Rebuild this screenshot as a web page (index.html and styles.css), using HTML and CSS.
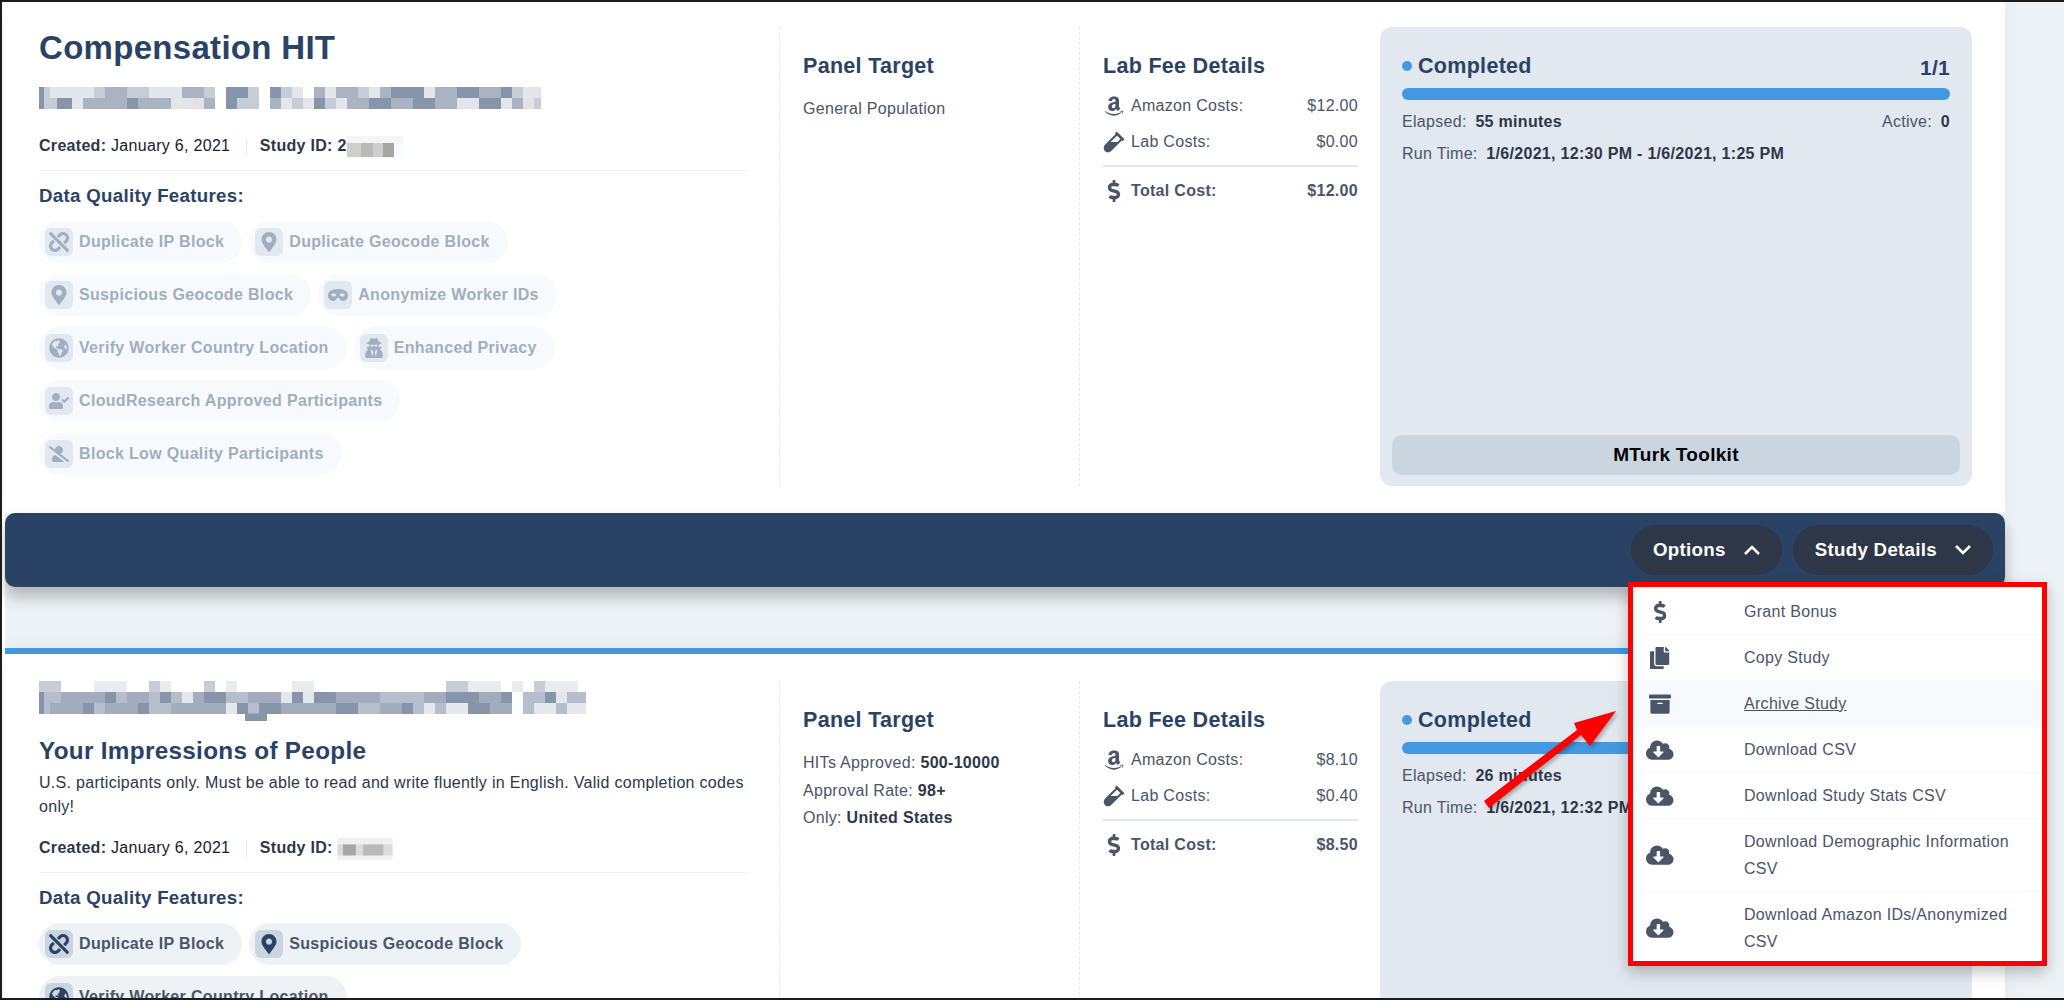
FILE: index.html
```html
<!DOCTYPE html>
<html>

<head>
    <title>Studies</title>
    <link rel="stylesheet" href="styles.css">
</head>

<body>
    <svg class="icon-defs">
        <defs>
            <path id="i-dollar" d="M209.2 233.4l-108-31.6C88.7 198.2 80 186.5 80 173.5c0-16.3 13.2-29.5 29.5-29.5h66.3c12.2 0 24.2 3.7 34.2 10.5 6.1 4.1 14.3 3.1 19.5-2l34.8-34c7.1-6.9 6.1-18.4-1.8-24.5C238 74.8 207.4 64.1 176 64V16c0-8.8-7.2-16-16-16h-32c-8.8 0-16 7.2-16 16v48h-2.5C45.8 64-5.4 118.7.5 183.6c4.2 46.1 39.4 83.6 83.8 96.6l102.5 30c12.5 3.7 21.2 15.3 21.2 28.3 0 16.3-13.2 29.5-29.5 29.5h-66.3C100 368 88 364.3 78 357.5c-6.1-4.1-14.3-3.1-19.5 2l-34.8 34c-7.1 6.9-6.1 18.4 1.8 24.5 24.5 19.2 55.1 29.9 86.5 30v48c0 8.8 7.2 16 16 16h32c8.8 0 16-7.2 16-16v-48.2c46.6-.9 90.3-28.6 105.7-72.7 21.5-61.6-14.6-124.8-72.5-141.7z"/>
            <path id="i-copy" d="M320 448v40c0 13.255-10.745 24-24 24H24c-13.255 0-24-10.745-24-24V120c0-13.255 10.745-24 24-24h72v296c0 30.879 25.121 56 56 56h168zm0-344V0H152c-13.255 0-24 10.745-24 24v368c0 13.255 10.745 24 24 24h272c13.255 0 24-10.745 24-24V128H344c-13.2 0-24-10.8-24-24zm120.971-31.029L375.029 7.029A24 24 0 0 0 358.059 0H352v96h96v-6.059a24 24 0 0 0-7.029-16.97z"/>
            <path id="i-archive" d="M32 448c0 17.7 14.3 32 32 32h384c17.7 0 32-14.3 32-32V160H32v288zm160-212c0-6.6 5.4-12 12-12h104c6.6 0 12 5.4 12 12v8c0 6.6-5.4 12-12 12H204c-6.6 0-12-5.4-12-12v-8zM480 32H32C14.3 32 0 46.3 0 64v48c0 8.8 7.2 16 16 16h480c8.8 0 16-7.2 16-16V64c0-17.7-14.3-32-32-32z"/>
            <path id="i-cloud" d="M537.6 226.6c4.1-10.7 6.4-22.4 6.4-34.6 0-53-43-96-96-96-19.7 0-38.1 6-53.3 16.2C367 64.2 315.3 32 256 32c-88.4 0-160 71.6-160 160 0 2.7.1 5.4.2 8.1C40.2 219.8 0 273.2 0 336c0 79.5 64.5 144 144 144h368c70.7 0 128-57.3 128-128 0-61.9-44-113.6-102.4-125.4zm-132.9 88.7L299.3 420.7c-6.2 6.2-16.4 6.2-22.6 0L171.3 315.3c-10.1-10.1-2.9-27.3 11.3-27.3H248V176c0-8.8 7.2-16 16-16h48c8.8 0 16 7.2 16 16v112h65.4c14.2 0 21.4 17.2 11.3 27.3z"/>
            <path id="i-marker" d="M172.268 501.67C26.97 291.031 0 268.413 0 192 0 85.961 85.961 0 192 0s192 85.961 192 192c0 76.413-26.97 99.031-172.268 309.67-9.535 13.774-29.93 13.773-39.464 0zM192 272c44.183 0 80-35.817 80-80s-35.817-80-80-80-80 35.817-80 80 35.817 80 80 80z"/>
            <path id="i-amazon" d="M257.2 162.7c-48.7 1.8-169.5 15.5-169.5 117.5 0 109.5 138.3 114 183.5 43.2 6.5 10.2 35.4 37.5 45.3 46.8l56.8-56S341 288.9 341 261.4V114.3C341 89 316.5 32 228.7 32 140.7 32 94 87 94 136.3l73.5 6.8c16.3-49.5 54.2-49.5 54.2-49.5 40.7-.1 35.5 29.8 35.5 69.1zm0 86.8c0 80-84.2 68-84.2 17.2 0-47.2 50.5-56.7 84.2-57.8v40.6zm136 163.5c-7.7 10-70 67-174.5 67S34.2 408.5 9.7 379c-6.8-7.7 1-11.3 5.5-8.3C88.5 415.2 203 488.5 387.7 401c7.5-3.7 13.3 2 5.5 12zm39.8 2.2c-6.5 15.8-16 26.8-21.2 31-5.5 4.5-9.5 2.7-6.5-3.8s19.3-46.5 12.7-55c-6.5-8.3-37-4.3-48-3.2-10.8 1-13 2-14-.3-2.3-5.7 21.7-15.5 37.5-17.5 15.7-1.8 41-.8 46 5.7 3.7 5.1 0 27.1-6.5 43.1z"/>
            <path id="i-vial" d="M477.7 186.1L309.5 18.3c-3.1-3.1-8.2-3.1-11.3 0l-34 33.9c-3.1 3.1-3.1 8.2 0 11.3l11.2 11.1L33 316.5c-38.8 38.7-45.1 102-9.4 143.5 20.6 24 49.5 36 78.4 35.9 26.4 0 52.8-10 72.9-30.1l246.3-245.7 11.2 11.1c3.1 3.1 8.2 3.1 11.3 0l34-33.9c3.1-3 3.1-8.1 0-11.2zM318 256H161l148-147.7 78.5 78.3L318 256z"/>
            <path id="i-unlink" d="M304.083 405.907c4.686 4.686 4.686 12.284 0 16.971l-44.674 44.674c-59.263 59.262-155.693 59.266-214.961 0-59.264-59.265-59.264-155.696 0-214.96l44.675-44.675c4.686-4.686 12.284-4.686 16.97 0l39.598 39.598c4.686 4.686 4.686 12.284 0 16.971l-44.675 44.674c-28.072 28.073-28.072 73.75 0 101.823 28.072 28.072 73.75 28.073 101.824 0l44.674-44.674c4.686-4.686 12.284-4.686 16.971 0l39.598 39.598zm-56.568-260.216c4.686 4.686 12.284 4.686 16.971 0l44.674-44.674c28.072-28.075 73.75-28.073 101.824 0 28.072 28.073 28.072 73.75 0 101.823l-44.675 44.674c-4.686 4.686-4.686 12.284 0 16.971l39.598 39.598c4.686 4.686 12.284 4.686 16.97 0l44.675-44.675c59.265-59.265 59.265-155.695 0-214.96-59.266-59.264-155.695-59.264-214.961 0l-44.674 44.674c-4.686 4.686-4.686 12.284 0 16.971l39.598 39.598zm234.828 359.28l22.627-22.627c9.373-9.373 9.373-24.569 0-33.941L63.598 7.029c-9.373-9.373-24.569-9.373-33.941 0L7.029 29.657c-9.373 9.373-9.373 24.569 0 33.941l441.373 441.373c9.373 9.372 24.569 9.372 33.941 0z"/>
            <path id="i-globe" d="M248 8C111.03 8 0 119.03 0 256s111.03 248 248 248 248-111.03 248-248S384.97 8 248 8zm82.29 357.6c-3.9 3.88-7.99 7.95-11.31 11.28-2.99 3-5.1 6.7-6.17 10.71-1.51 5.66-2.73 11.38-4.77 16.87l-17.39 46.85c-13.76 3-28 4.69-42.65 4.69v-27.38c1.69-12.62-7.64-36.26-22.63-51.25-6-6-9.37-14.14-9.37-22.63v-32.01c0-11.64-6.27-22.34-16.46-27.97-14.37-7.95-34.81-19.06-48.81-26.11-11.48-5.78-22.1-13.14-31.65-21.75l-.8-.72a114.792 114.792 0 0 1-18.06-20.74c-9.38-13.77-24.66-36.42-34.59-51.14 20.47-45.5 57.36-82.04 103.2-101.89l24.01 12.01C203.48 89.74 216 82.01 216 70.11v-11.3c7.99-1.29 16.12-2.11 24.39-2.42l28.3 28.3c6.25 6.25 6.25 16.38 0 22.63L264 112l-10.34 10.34c-3.12 3.12-3.12 8.19 0 11.31l4.69 4.69c3.12 3.12 3.12 8.19 0 11.31l-8 8a8.008 8.008 0 0 1-5.66 2.34h-8.99c-2.08 0-4.08.81-5.58 2.27l-9.92 9.65a8.008 8.008 0 0 0-1.58 9.31l15.59 31.19c2.66 5.32-1.21 11.58-7.15 11.58h-5.64c-1.93 0-3.79-.7-5.24-1.96l-9.28-8.06a16.017 16.017 0 0 0-15.55-3.1l-31.17 10.39a11.95 11.95 0 0 0-8.17 11.34c0 4.53 2.56 8.66 6.61 10.69l11.08 5.54c9.41 4.71 19.79 7.16 30.31 7.16s22.59 27.29 32 32h66.75c8.49 0 16.62 3.37 22.63 9.37l13.69 13.69a30.503 30.503 0 0 1 8.93 21.57 46.536 46.536 0 0 1-13.72 32.98zM417 274.25c-5.79-1.45-10.84-5-14.15-9.97l-17.98-26.97a23.97 23.97 0 0 1 0-26.62l19.59-29.38c2.32-3.47 5.5-6.29 9.24-8.15l12.98-6.49C440.2 193.59 448 223.87 448 256c0 8.67-.74 17.16-1.82 25.54L417 274.25z"/>
            <path id="i-usercheck" d="M224 256c70.7 0 128-57.3 128-128S294.7 0 224 0 96 57.3 96 128s57.3 128 128 128zm89.6 32h-16.7c-22.2 10.2-46.9 16-72.9 16s-50.6-5.8-72.9-16h-16.7C60.2 288 0 348.2 0 422.4V464c0 26.5 21.5 48 48 48h352c26.5 0 48-21.5 48-48v-41.6c0-74.2-60.2-134.4-134.4-134.4zm323-128.4l-27.8-28.1c-4.6-4.7-12.1-4.7-16.8-.1l-104.8 104-45.5-45.8c-4.6-4.7-12.1-4.7-16.8-.1l-28.1 27.9c-4.7 4.6-4.7 12.1-.1 16.8l81.7 82.3c4.6 4.7 12.1 4.7 16.8.1l141.3-140.2c4.6-4.7 4.7-12.2.1-16.8z"/>
            <path id="i-userslash" d="M633.8 458.1L362.3 248.3C412.1 230.7 448 183.8 448 128 448 57.3 390.7 0 320 0c-67.1 0-121.5 51.8-126.9 117.4L45.5 3.4C38.5-2 28.5-.8 23 6.2L3.4 31.4c-5.4 7-4.2 17 2.8 22.4l588.4 454.7c7 5.4 17 4.2 22.5-2.8l19.6-25.3c5.4-6.8 4.1-16.9-2.9-22.3zM96 422.4V464c0 26.5 21.5 48 48 48h350.2L207.4 290.3C144.2 301.3 96 356 96 422.4z"/>
            <path id="i-mask" d="M320.67 64c-442.6 0-357.57 384-158.46 384 39.9 0 77.47-20.69 101.42-55.86l25.73-37.79c15.66-22.99 46.97-22.99 62.63 0l25.73 37.79C401.66 427.31 439.23 448 479.13 448c189.86 0 290.63-384-158.46-384zM184 308.36c-41.06 0-67.76-25.66-80.08-41.05-5.23-6.53-5.23-16.09 0-22.63 12.32-15.4 39.01-41.05 80.08-41.05s67.76 25.66 80.08 41.05c5.23 6.53 5.23 16.09 0 22.63-12.32 15.39-39.02 41.05-80.08 41.05zm272 0c-41.06 0-67.76-25.66-80.08-41.05-5.23-6.53-5.23-16.09 0-22.63 12.32-15.4 39.01-41.05 80.08-41.05s67.76 25.66 80.08 41.05c5.23 6.53 5.23 16.09 0 22.63-12.32 15.39-39.02 41.05-80.08 41.05z"/>
            <path id="i-secret" d="M383.9 308.3l23.9-62.6c4-10.5-3.7-21.7-15-21.7h-58.5c11-18.9 17.8-40.6 17.8-64v-.3c39.2-7.8 64-19.1 64-31.7 0-13.3-27.3-25.1-70.1-33-9.2-32.8-27-65.8-40.6-82.8-9.5-11.9-25.9-15.6-39.5-8.8l-27.6 13.8c-9 4.5-19.6 4.5-28.6 0L182.1 3.4c-13.6-6.8-30-3.1-39.5 8.8-13.5 17-31.4 50-40.6 82.8-42.7 7.9-70 19.7-70 33 0 12.6 24.8 23.9 64 31.7v.3c0 23.4 6.8 45.1 17.8 64H56.3c-11.5 0-19.2 11.7-14.7 22.3l25.8 60.2C27.3 329.8 0 372.7 0 422.4v44.8C0 491.9 20.1 512 44.8 512h358.4c24.7 0 44.8-20.1 44.8-44.8v-44.8c0-48.4-25.8-90.4-64.1-114.1zM176 480l-41.6-192 49.6 32 24 40-32 120zm96 0l-32-120 24-40 49.6-32L272 480zm41.7-298.5c-3.9 11.9-7 24.6-16.5 33.4-10.1 9.3-48 22.4-64-25-2.8-8.4-15.4-8.4-18.3 0-17 50.2-56 32.4-64 25-9.5-8.8-12.7-21.5-16.5-33.4-.8-2.5-6.3-5.7-6.3-5.8v-10.8c28.3 3.6 61 5.8 96 5.8s67.7-2.1 96-5.8v10.8c-.1.1-5.6 3.2-6.4 5.8z"/>
        </defs>
    </svg>

    <div class="screen">
        <div class="page">

            <!-- first study -->
            <div class="study">
                <div class="info">
                    <h2 class="study-title">Compensation HIT</h2>
                    <svg class="mosaic mosaic-name" viewBox="0 0 502 23" fill="none" stroke-width="11">
                        <rect width="502" height="22" fill="#c6cdd7"/>
                        <path stroke="#e3e7ec" d="M11 5.5H55M110 5.5H143M231 5.5H242M253 5.5H264M286 5.5H297M330 5.5H341M385 5.5H396M484 5.5H502M33 16.5H44M132 16.5H165M242 16.5H253M264 16.5H275M297 16.5H308M418 16.5H440M462 16.5H473"/>
                        <path stroke="#a9b3c1" d="M66 5.5H88M143 5.5H165M275 5.5H286M297 5.5H319M341 5.5H352M396 5.5H418M440 5.5H462M44 16.5H88M99 16.5H132M165 16.5H187M220 16.5H242M308 16.5H330M352 16.5H374M396 16.5H418M473 16.5H484"/>
                        <path stroke="#8795ab" d="M0 5.5H5M0 16.5H5M187 5.5H209M231 5.5H242M264 5.5H275M352 5.5H374M374 5.5H385M418 5.5H440M462 5.5H473M18 16.5H33M88 16.5H99M187 16.5H198M275 16.5H286M330 16.5H352M374 16.5H396M440 16.5H462"/>
                        <path stroke="#fff" d="M176 5.5H187M220 5.5H231M264 5.5H275M176 16.5H187M220 16.5H231"/>
                        <path stroke="#e6e2e4" d="M154 16.5H165M484 16.5H495"/>
                    </svg>
                    <div class="meta">
                        <b>Created:</b> January 6, 2021
                        <span class="meta-sep"></span>
                        <b>Study ID:</b> <b>2</b><svg class="mosaic mosaic-id" viewBox="0 0 56 22"><rect width="56" height="22" fill="#f3f5f6"/><rect x="0" y="7" width="47" height="14" fill="#cfcdcd"/><rect x="14" y="7" width="12" height="14" fill="#bdb9b9"/><rect x="36" y="7" width="11" height="14" fill="#a8a4a4"/><rect x="47" y="7" width="9" height="15" fill="#f6fbfd"/></svg>
                    </div>
                    <h4 class="features-title">Data Quality Features:</h4>
                    <div class="chips chips-off">
                        <div class="chip"><span class="chip-icon"><svg viewBox="0 0 512 512"><use href="#i-unlink"/></svg></span>Duplicate IP Block</div>
                        <div class="chip"><span class="chip-icon"><svg viewBox="0 0 384 512"><use href="#i-marker"/></svg></span>Duplicate Geocode Block</div>
                        <div class="chip"><span class="chip-icon"><svg viewBox="0 0 384 512"><use href="#i-marker"/></svg></span>Suspicious Geocode Block</div>
                        <div class="chip"><span class="chip-icon"><svg viewBox="0 0 640 512"><use href="#i-mask"/></svg></span>Anonymize Worker IDs</div>
                        <div class="chip"><span class="chip-icon"><svg viewBox="0 0 496 512"><use href="#i-globe"/></svg></span>Verify Worker Country Location</div>
                        <div class="chip"><span class="chip-icon"><svg viewBox="0 0 448 512"><use href="#i-secret"/></svg></span>Enhanced Privacy</div>
                        <div class="chip"><span class="chip-icon"><svg viewBox="0 0 640 512"><use href="#i-usercheck"/></svg></span>CloudResearch Approved Participants</div>
                        <div class="chip"><span class="chip-icon"><svg viewBox="0 0 640 512"><use href="#i-userslash"/></svg></span>Block Low Quality Participants</div>
                    </div>
                </div>

                <div class="panel">
                    <h3>Panel Target</h3>
                    <p class="panel-row">General Population</p>
                </div>

                <div class="fees">
                    <h3>Lab Fee Details</h3>
                    <div class="fee-row"><svg class="fee-icon" viewBox="0 0 448 512"><use href="#i-amazon"/></svg><span class="fee-name">Amazon Costs:</span><span>$12.00</span></div>
                    <div class="fee-row"><svg class="fee-icon" viewBox="0 0 480 512"><use href="#i-vial"/></svg><span class="fee-name">Lab Costs:</span><span>$0.00</span></div>
                    <div class="fee-row fee-total"><svg class="fee-icon" viewBox="-80 0 448 512"><use href="#i-dollar"/></svg><span class="fee-name">Total Cost:</span><span>$12.00</span></div>
                </div>

                <div class="status">
                    <div class="status-head">
                        <h3><span class="dot"></span>Completed</h3>
                        <span class="status-count">1/1</span>
                    </div>
                    <div class="progress"></div>
                    <div class="status-row"><span>Elapsed: <b>55 minutes</b></span><span>Active: <b>0</b></span></div>
                    <div class="status-row">
                        <span>Run Time: <b>1/6/2021, 12:30 PM - 1/6/2021, 1:25 PM</b></span>
                    </div>
                    <button class="toolkit">MTurk Toolkit</button>
                </div>
            </div>

            <div class="bar">
                <button class="bar-btn">Options
                    <svg viewBox="0 0 18 12"><path d="M2 10l7-7 7 7"/></svg>
                </button>
                <button class="bar-btn">Study Details
                    <svg viewBox="0 0 18 12"><path d="M2 2l7 7 7-7"/></svg>
                </button>

                <div class="menu">
                    <a class="menu-row"><span class="menu-icon"><svg viewBox="0 0 288 512"><use href="#i-dollar"/></svg></span>Grant Bonus</a>
                    <a class="menu-row"><span class="menu-icon"><svg viewBox="0 0 448 512"><use href="#i-copy"/></svg></span>Copy Study</a>
                    <a class="menu-row menu-row-hover"><span class="menu-icon"><svg viewBox="0 0 512 512"><use href="#i-archive"/></svg></span><span class="menu-text">Archive Study</span></a>
                    <a class="menu-row"><span class="menu-icon"><svg viewBox="0 0 640 512"><use href="#i-cloud"/></svg></span>Download CSV</a>
                    <a class="menu-row"><span class="menu-icon"><svg viewBox="0 0 640 512"><use href="#i-cloud"/></svg></span>Download Study Stats CSV</a>
                    <a class="menu-row"><span class="menu-icon"><svg viewBox="0 0 640 512"><use href="#i-cloud"/></svg></span><span class="menu-text">Download Demographic Information CSV</span></a>
                    <a class="menu-row"><span class="menu-icon"><svg viewBox="0 0 640 512"><use href="#i-cloud"/></svg></span><span class="menu-text">Download Amazon IDs/Anonymized CSV</span></a>
                </div>
            </div>

            <!-- second study -->
            <div class="study study-next">
                <div class="info">
                    <svg class="mosaic mosaic-name-2" viewBox="0 0 547 40" fill="none" stroke-width="11">
                        <rect y="11" width="547" height="22" fill="#b5bfcc"/>
                        <path stroke="#c6cdd7" d="M0 5.5H22M110 5.5H121M165 5.5H176M407 5.5H429M495 5.5H506"/>
                        <path stroke="#e9ecef" d="M55 5.5H88M121 5.5H132M187 5.5H198M253 5.5H275M429 5.5H462M473 5.5H484M506 5.5H539"/>
                        <path stroke="#8795ab" d="M0 16.5H5M0 27.5H5M66 16.5H77M121 16.5H132M165 16.5H187M253 16.5H264M275 16.5H297M407 16.5H440M462 16.5H473M506 16.5H517M44 27.5H55M99 27.5H110M198 27.5H209M220 27.5H242M297 27.5H319M363 27.5H374M429 27.5H451"/>
                        <path stroke="#a1adbc" d="M22 16.5H66M88 16.5H110M143 16.5H165M209 16.5H242M297 16.5H341M385 16.5H407M440 16.5H462M11 27.5H44M66 27.5H99M132 27.5H198M242 27.5H297M341 27.5H363M451 27.5H484"/>
                        <path stroke="#e4e8ec" d="M143 16.5H154M242 16.5H253M264 16.5H275M473 16.5H484M517 16.5H528M187 27.5H198M385 27.5H396M407 27.5H429M495 27.5H517M528 27.5H547"/>
                        <path stroke="#fff" d="M473 16.5H484M473 27.5H484"/>
                        <path stroke="#8795ab" d="M206 38H228"/>
                    </svg>
                    <h2 class="study-title study-title-sub">Your Impressions of People</h2>
                    <p class="study-desc">U.S. participants only. Must be able to read and write fluently in English. Valid completion codes only!</p>
                    <div class="meta meta-tight">
                        <b>Created:</b> January 6, 2021
                        <span class="meta-sep"></span>
                        <b>Study ID:</b> <svg class="mosaic mosaic-id" viewBox="0 0 60 24"><rect width="60" height="24" fill="#f0f0f1"/><rect x="0" y="7" width="60" height="12" fill="#dcdbdc"/><rect x="6" y="7" width="14" height="12" fill="#a9a6a8"/><rect x="28" y="7" width="22" height="12" fill="#bcb9ba"/></svg>
                    </div>
                    <h4 class="features-title">Data Quality Features:</h4>
                    <div class="chips">
                        <div class="chip"><span class="chip-icon"><svg viewBox="0 0 512 512"><use href="#i-unlink"/></svg></span>Duplicate IP Block</div>
                        <div class="chip"><span class="chip-icon"><svg viewBox="0 0 384 512"><use href="#i-marker"/></svg></span>Suspicious Geocode Block</div>
                        <div class="chip"><span class="chip-icon"><svg viewBox="0 0 496 512"><use href="#i-globe"/></svg></span>Verify Worker Country Location</div>
                    </div>
                </div>

                <div class="panel">
                    <h3>Panel Target</h3>
                    <p class="panel-row">HITs Approved: <b>500-10000</b></p>
                    <p class="panel-row">Approval Rate: <b>98+</b></p>
                    <p class="panel-row">Only: <b>United States</b></p>
                </div>

                <div class="fees">
                    <h3>Lab Fee Details</h3>
                    <div class="fee-row"><svg class="fee-icon" viewBox="0 0 448 512"><use href="#i-amazon"/></svg><span class="fee-name">Amazon Costs:</span><span>$8.10</span></div>
                    <div class="fee-row"><svg class="fee-icon" viewBox="0 0 480 512"><use href="#i-vial"/></svg><span class="fee-name">Lab Costs:</span><span>$0.40</span></div>
                    <div class="fee-row fee-total"><svg class="fee-icon" viewBox="-80 0 448 512"><use href="#i-dollar"/></svg><span class="fee-name">Total Cost:</span><span>$8.50</span></div>
                </div>

                <div class="status">
                    <div class="status-head">
                        <h3><span class="dot"></span>Completed</h3>
                    </div>
                    <div class="progress"></div>
                    <div class="status-row"><span>Elapsed: <b>26 minutes</b></span></div>
                    <div class="status-row"><span>Run Time: <b>1/6/2021, 12:32 PM</b></span></div>
                </div>
            </div>

        </div>

        <!-- red arrow drawn on the screenshot -->
        <svg class="arrow" viewBox="0 0 160 115">
            <polygon points="146,11 120,46 111,35 19,108 14,101 107,30 104,23"/>
        </svg>
    </div>
</body>

</html>
```

FILE: styles.css
```css
* {
    margin: 0;
    box-sizing: border-box;
}

body {
    font-family: "Liberation Sans", Arial, sans-serif;
    font-size: 16px;
    letter-spacing: .3px;
    color: #4a5568;
    background-color: #edf2f7;
    overflow: hidden;
}

.icon-defs {
    display: none;
}

.screen {
    position: relative;
    height: 1000px;
    overflow: hidden;
    border: 2px solid #1c1c1c;
    border-right: none;
    background-color: #edf2f7;
}

.page {
    width: 2003px;
    border-left: 3px solid #fff;
}

h3 {
    font-size: 21.5px;
    line-height: 28px;
    color: #2a4365;
}

/* study card */
.study {
    display: grid;
    grid-template-columns: 775px 300px 300px 592px;
    padding: 25px 33px 27px 0;
    background-color: #fff;
    box-shadow: 0 0 20px rgba(0, 0, 0, .05);
}

.study-next {
    padding-top: 27px;
    border-top: 6px solid #4299e1;
}

.info {
    padding: 0 32px 0 34px;
    border-right: 1px dashed #e2e8f0;
}

.study-title {
    margin-top: 1px;
    font-size: 33px;
    line-height: 40px;
    color: #2a4365;
}

.study-title-sub {
    margin-top: 14px;
    font-size: 24.3px;
    line-height: 32px;
}

.study-desc {
    margin-top: 4px;
    font-size: 16px;
    line-height: 24px;
    color: #2d3748;
}

.mosaic {
    display: block;
}

.mosaic-name {
    width: 502px;
    height: 23px;
    margin-top: 19px;
}

.mosaic-name-2 {
    width: 547px;
    height: 40px;
}

.mosaic-id {
    display: inline-block;
    width: 56px;
    height: 22px;
    margin: -4px 0;
    vertical-align: middle;
}

.meta {
    margin-top: 26px;
    padding-bottom: 14px;
    border-bottom: 1px solid #edf2f7;
    font-size: 16px;
    line-height: 20px;
    color: #1a202c;
}

.meta-tight {
    margin-top: 19px;
}

.meta b {
    color: #2d3748;
}

.meta-sep {
    display: inline-block;
    height: 16px;
    margin: 0 8px 0 11px;
    border-left: 1px solid #e2e8f0;
    vertical-align: middle;
}

.features-title {
    margin-top: 13px;
    font-size: 18.7px;
    line-height: 24px;
    color: #2a4365;
}

/* data quality chips */
.chips {
    display: flex;
    flex-wrap: wrap;
    gap: 11px 7px;
    margin-top: 13px;
    padding-right: 50px;
}

.chip {
    display: flex;
    align-items: center;
    height: 42px;
    padding: 0 18px 0 6px;
    border-radius: 21px;
    background-color: #edf2f7;
    font-size: 16px;
    font-weight: bold;
    letter-spacing: .33px;
    color: #4a5568;
}

.chip-icon {
    display: flex;
    align-items: center;
    justify-content: center;
    width: 28px;
    height: 28px;
    margin-right: 6px;
    border-radius: 6px;
    background-color: #cbd5e0;
    color: #2a4365;
}

.chip-icon svg {
    width: 20px;
    height: 20px;
    fill: currentColor;
}

.chips-off .chip {
    background-color: #f7fafc;
    color: #a0aec0;
}

.chips-off .chip-icon {
    background-color: #e2e8f0;
    color: #a0aec0;
}

/* panel target */
.panel {
    padding: 25px 0 0 23px;
    border-right: 1px dashed #e2e8f0;
}

.panel-row {
    font-size: 16px;
    line-height: 27.5px;
}

.panel-row:nth-child(2) {
    margin-top: 15px;
}

.panel-row b {
    color: #2d3748;
}

/* lab fees */
.fees {
    padding: 25px 22px 0 23px;
}

.fee-row {
    display: flex;
    align-items: center;
    height: 36px;
    font-size: 16px;
}

h3 + .fee-row {
    margin-top: 8px;
}

.fee-icon {
    width: 22px;
    height: 22px;
    margin-right: 6px;
    fill: currentColor;
}

.fee-name {
    flex: 1;
}

.fee-total {
    margin-top: 5px;
    padding-top: 6px;
    border-top: 2px solid #e2e8f0;
    font-weight: bold;
    box-sizing: content-box;
}

/* status box */
.status {
    display: flex;
    flex-direction: column;
    min-height: 459px;
    padding: 25px 22px 11px 22px;
    border-radius: 12px;
    background-color: #e2e8f0;
}

.status-head {
    display: flex;
    justify-content: space-between;
    align-items: flex-end;
}

.status-head h3 {
    display: flex;
    align-items: center;
}

.dot {
    width: 10px;
    height: 10px;
    margin-right: 6px;
    border-radius: 50%;
    background-color: #4299e1;
}

.status-count {
    font-size: 21px;
    font-weight: bold;
    color: #2a4365;
}

.progress {
    height: 12px;
    margin-top: 8px;
    border-radius: 6px;
    background-color: #4299e1;
}

.status-row {
    display: flex;
    justify-content: space-between;
    margin-top: 12px;
    font-size: 16px;
    line-height: 20px;
}

.status-row b {
    margin-left: 4px;
    color: #2d3748;
}

.toolkit {
    margin: auto -10px 0 -10px;
    height: 40px;
    border: none;
    border-radius: 10px;
    background-color: #cbd5e0;
    font-family: inherit;
    font-size: 19px;
    font-weight: bold;
    letter-spacing: .3px;
    color: #000;
}

/* navy action bar */
.bar {
    position: relative;
    z-index: 1;
    display: flex;
    justify-content: flex-end;
    align-items: center;
    gap: 11px;
    height: 74px;
    margin-bottom: 61px;
    padding-right: 12px;
    border-radius: 10px;
    background-color: #2a4365;
    box-shadow: 0 10px 15px rgba(0, 0, 0, .25);
}

.bar-btn {
    display: flex;
    align-items: center;
    gap: 17px;
    height: 50px;
    padding: 0 21px 0 22px;
    border: none;
    border-radius: 25px;
    background-color: #2d3748;
    font-family: inherit;
    font-size: 18.7px;
    font-weight: bold;
    letter-spacing: .3px;
    color: #fff;
}

.bar-btn svg {
    width: 18px;
    height: 12px;
    fill: none;
    stroke: #fff;
    stroke-width: 2.6;
}

/* options dropdown, with the red box of the screenshot */
.menu {
    position: absolute;
    top: 69px;
    right: -42px;
    width: 419px;
    border: 5px solid #f00;
    background-color: #fff;
    box-shadow: 0 6px 14px rgba(0, 0, 0, .25);
}

.menu-row {
    display: flex;
    align-items: center;
    padding: 9px 12px 9px 0;
    border-bottom: 1px solid #f7fafc;
    font-size: 16px;
    line-height: 27px;
}

.menu-row:first-child {
    padding-top: 11px;
}

.menu-row:last-child {
    padding-bottom: 6px;
    border-bottom: none;
}

.menu-row-hover {
    background-color: #f7fafc;
}

.menu-row-hover .menu-text {
    text-decoration: underline;
}

.menu-icon {
    flex: none;
    display: flex;
    justify-content: center;
    width: 54px;
    margin-right: 57px;
}

.menu-icon svg {
    height: 22px;
    fill: #4a5568;
}

.arrow {
    position: absolute;
    left: 1468px;
    top: 698px;
    width: 160px;
    height: 115px;
    fill: #f00;
    filter: drop-shadow(2px 2px 2px rgba(0, 0, 0, .3));
}
```
